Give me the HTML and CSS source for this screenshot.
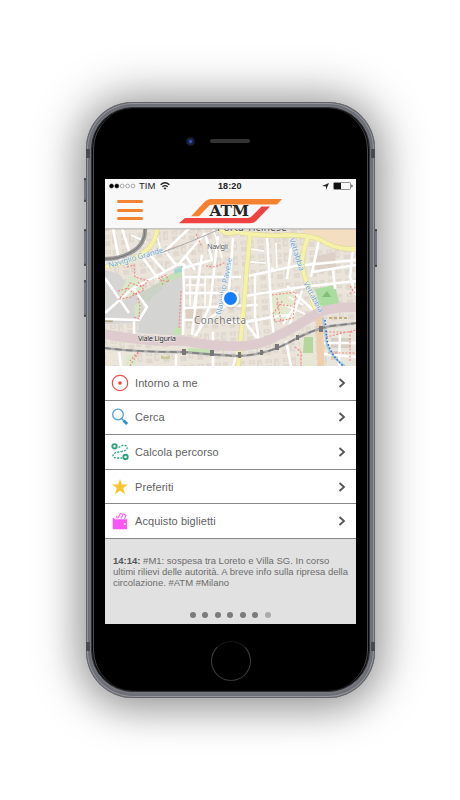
FILE: index.html
```html
<!DOCTYPE html>
<html lang="it">
<head>
<meta charset="utf-8">
<title>ATM Milano</title>
<link rel="stylesheet" href="styles.css">
</head>
<body>
<div class="phone">
  <i class="key mute"></i><i class="key vol-up"></i><i class="key vol-down"></i><i class="key power"></i>
  <i class="band band-tl"></i><i class="band band-tr"></i><i class="band band-bl"></i><i class="band band-br"></i>
  <div class="face">
    <div class="earpiece"><i class="camera"></i><i class="speaker"></i></div>
    <main class="screen">
      <header class="top">
        <div class="status">
          <svg class="signal" viewBox="0 0 28 6" width="28" height="6"><g stroke="#222" stroke-width=".6"><circle cx="2.5" cy="3" r="2"/><circle cx="7.8" cy="3" r="2"/><g fill="none" stroke="#777"><circle cx="13.2" cy="3" r="1.9"/><circle cx="18.6" cy="3" r="1.9"/><circle cx="24" cy="3" r="1.9"/></g></g></svg>
          <span class="carrier">TIM</span>
          <svg class="wifi" viewBox="0 0 10 8" width="10" height="8"><g fill="none" stroke="#222" stroke-width="1.3"><path d="M.6 2.8Q5-1.2 9.4 2.8"/><path d="M2.3 4.8Q5 2.5 7.7 4.8"/></g><path d="M3.5 6Q5 4.8 6.5 6L5 7.7z" fill="#222"/></svg>
          <span class="time">18:20</span>
          <svg class="locate" viewBox="0 0 8 8" width="7" height="7"><path d="M8 0L4.6 8V3.9L0 3.5z" fill="#222"/></svg>
          <svg class="battery" viewBox="0 0 20 8" width="20" height="8"><rect x=".5" y=".5" width="17" height="7" rx="1" fill="none" stroke="#777" stroke-width=".8"/><path d="M1 1h7v6H1z" fill="#111"/><path d="M18.3 2.5q1.4.2 1.4 1.5t-1.4 1.5z" fill="#444"/></svg>
        </div>
        <div class="bar">
          <div class="menu"><i></i><i></i><i></i></div>
          <svg class="logo" viewBox="0 0 104 26" width="104" height="26">
            <path d="M12 18.2L25 4.5Q28 1 32 1H103L98 6.500H34Q31 6.500 29 8.800L20 18.200z" fill="#f58230"/>
            <path d="M0 25.200L6 20H69Q71 20 73 18L82.500 8.500H91L77.500 22.500Q75 25.200 71 25.200z" fill="#ee4340"/>
            <text class="brand" x="30.500" y="18.400" textLength="39.500" lengthAdjust="spacingAndGlyphs">ATM</text>
          </svg>
        </div>
      </header>
      <svg class="map" viewBox="105 229 251 137" width="251" height="137">
        <defs>
          <pattern id="blocks" width="17" height="15" patternUnits="userSpaceOnUse" patternTransform="rotate(-4)">
            <path d="M0 0h17v15H0z" fill="#eae4db"/><path d="M2 2h6v4H2zM10 2h5v9h-5zM2 8h6v5H2z" fill="#e0d8ce"/><path d="M4 3h2v2H4zM12 5h2v4h-2z" fill="#e9e3da"/>
          </pattern>
        </defs>
        <path d="M105 228h251v138H105z" fill="url(#blocks)"/>
        <path d="M105 270l14 4 8 10-11 16 22-6 6 14-4 15-35 1z" fill="#d6d5d3"/>
        <path d="M138 295l40-23 5 4-2 60-43-3 1-13 9-14z" fill="#d4d4d3"/>
        <path d="M140 293l22-12 1 7-18 16-6-4z" fill="#cbd2c6"/>
        <path d="M159 281l23-13 2 8-15 5-8 6z" fill="#c5dfb8"/><path d="M174 270l8-4 0 5-7 3z" fill="#9ed5d2"/>
        <path d="M119 294l9-17 7-2 6 10 4 3-21 12z" fill="#dce8cc"/><path d="M134 306l8-7-1 14-6 5z" fill="#d3e6c5"/>
        <path d="M306 228h50v20q-26-1-38-10l-18-3z" fill="#f3dec2"/>
        <path d="M271 294l25-4-6 29-18 1z" fill="#e3e9cf"/>
        <path d="M317 256l18-4 1 16-14 5-7-4z" fill="#ddd0c7"/>
        <path d="M186 306h16v17h-16z" fill="#ddcfc1"/>
        <path d="M315 289l20-4 4 18-17 8-4-10z" fill="#abdca0"/><path d="M322 297l5-6 4 6z" fill="#83bd7a"/>
        <path d="M300 339l15-6-1 33h-12z" fill="#e7e8d4"/><path d="M304 337h9v16h-10z" fill="#b6d6a0"/>
        <path d="M325 330l31-5v41h-29z" fill="#e8e6dc"/><path d="M331 338h20v10h-20zM331 351h8v9h-8z" fill="#d6cec2"/>
        <path d="M106 353h28v12h-28z" fill="#ebe5da"/><path d="M126 355h10v11h-10z" fill="#dce9cd"/><path d="M188 348l20 1 8 7-28-3zM174 329l6-3 2 8-9 1z" fill="#c5e3b0"/>
        <path d="M161 355l4 2 5-2v4h-9z" fill="#cbc89c"/><path d="M105 318h8v4h-8z" fill="#aaa77c"/>
        <g fill="none" stroke="#fff" stroke-width="2.500" stroke-linejoin="round">
          <path d="M105 313l27-24 45-24q5-3 9 2M177 266l-12-15 31-29M179 264l26-31M105 278l24 35M105 319l34 1 8-13-14-19M134 320v15M183 268l1 20-1 47M183 277h58M183 293h56M184 308l74-3"/>
          <path d="M113 228l5 27 5 9M122 228l8 26M143 258l16 22M151 256l14 16M186 256l9 14M205 233l7 27-29 8M202 255l-8 52M200 267l-8 68M218 236l-8 69-14 31M233 238l-5 66-25 20-8 12M228 323l30-3M184 320h12"/>
          <path d="M248 276l47-10 61-6M242 323l30-6 16-2M245 296l57-9 54-6M267 237l5 83 2 16M255 274v42l4 25M291 248l-4 31M319 240l-8 37M312 272l44-7M333 270l2 19M353 250l-3 27 6 18M275 271l-4-3M295 306l-12 18M302 291l-13 35M287 286l26 24M240 315l17 23M213 332v34M286 341l5 25M239 348l-6 18M176 354v12M324 343h32M324 354l32 3M340 334l-1 32M119 352l2 14"/>
          <path d="M131 235l15 7M155 228l6 23M213 228l9 30M190 278v28M205 277v31M186 285h20M220 305l19 1M250 249l14 2M250 262l16 1M276 243l1 25M289 297l14 8M285 305l20 9" stroke-width="1.500"/>
        </g>
        <g fill="none" stroke="#f28783" stroke-width="1.100" stroke-dasharray="2 1.500">
          <path d="M127 267l7-2 1 12 13 4-6 6-12-4-5 9-6 7 12-2 8-6M118 291l10-3 7 7 9-5-6-8M138 298l2 8-1 13-5-2M158 279l8-4 3 7-8-2 2 5"/>
          <path d="M181 291l-1 18-1 19M206 266l9 1 11-5M165 251l10-4M196 234l6 13M272 295l24-3-3 26-18 4-2-8 10-14M276 304l15 2M277 298l4 24M130 366l5-8 5-8M138 352l-8 9M295 347l6 5v14M297 355h5M350 294l6-8M350 286l6 8M326 337l30-7M326 332h28M328 353h28M350 331v30"/>
        </g>
        <path d="M145 228q1 18-17 26-10 5-23 5" fill="none" stroke="#989898" stroke-width="4"/><path d="M145 228q1 18-17 26-10 5-23 5" fill="none" stroke="#777" stroke-width="1"/>
        <path d="M163 252q17-6 29-11t28-12" fill="none" stroke="#aaa" stroke-width="1"/>
        <g fill="none" stroke="#ddd58a" stroke-width="4.800"><path d="M157 228q-1 17-17 27-14 9-36 12"/><path d="M220 228q5 8 16 4 30 5 50 3 30 0 40 8 14 7 31 6M250 235l-3 30-3 40-6 62M308 237q-9 24-4 37l13 40"/></g>
        <g fill="none" stroke="#f5f1a9" stroke-width="4"><path d="M157 228q-1 17-17 27-14 9-36 12"/><path d="M220 228q5 8 16 4 30 5 50 3 30 0 40 8 14 7 31 6M250 235l-3 30-3 40-6 62M308 237q-9 24-4 37l13 40"/></g>
        <path d="M319 314l2 52" fill="none" stroke="#edcfad" stroke-width="7"/>
        <path d="M323 318l3 20q0 15 19 28" fill="none" stroke="#9bd0da" stroke-width="2"/><path d="M325 320l2 20q3 14 16 26" fill="none" stroke="#3d58d1" stroke-width="1.500" stroke-dasharray="1.500 2"/>
        <path d="M104 334q38 8 80 7 26 5 45 5 28 2 50-11 15-7 35-20 13-8 42-8" fill="none" stroke="#ddcbcd" stroke-width="9.500"/>
        <path d="M104 348q33 4 80 4 30 3 55 4 26-1 49-13 25-14 43-17l26-3" fill="none" stroke="#aaa" stroke-width="2.400"/>
        <path d="M104 348q33 4 80 4 30 3 55 4 26-1 49-13 25-14 43-17l26-3" fill="none" stroke="#808080" stroke-width="1.600" stroke-dasharray="7 4"/>
        <path d="M182 349h4v6h-4zM210 350h4v6h-4zM238 352h3v6h-3zM260 350h3v5h-3zM275 344h4v6h-4zM296 335h3v5h-3zM319 326h4v6h-4z" fill="#777"/>
        <path d="M329 318h20" stroke="#b49a5c" stroke-width="1.500" stroke-dasharray="3 2"/>
        <g class="water">
          <text transform="translate(109 268) rotate(-16)" textLength="57">Naviglio Grande</text>
          <text transform="translate(221 315) rotate(-79)" textLength="58">Naviglio Pavese</text>
          <text transform="translate(289 239) rotate(72)" textLength="34">Vettabbia</text>
          <text transform="translate(303 283) rotate(62)" textLength="34">Vettabbia</text>
        </g>
        <g class="places">
          <text x="217" y="231" font-size="10.500" textLength="70">Porta Ticinese</text>
          <text x="207" y="249" font-size="7.500" textLength="21">Navigli</text>
          <text class="road" x="138" y="341" font-size="7.500" textLength="38">Viale Liguria</text>
          <text class="area" x="194" y="324" font-size="10" textLength="52">Conchetta</text>
        </g>
        <path d="M105 229.500h251" stroke="#555" stroke-opacity=".15"/>
        <circle cx="231" cy="299" r="9.500" fill="#444" opacity=".2"/><circle cx="230.500" cy="298.500" r="8.800" fill="#fff"/><circle cx="230.500" cy="298.500" r="6.500" fill="#167efb"/>
      </svg>
      <nav class="list">
        <a class="row"><svg class="icon" viewBox="0 0 18 18"><circle cx="9" cy="9" r="7.700" fill="none" stroke="#f04b4b" stroke-width="1.200"/><circle cx="9" cy="9" r="1.800" fill="#f04040"/></svg><span>Intorno a me</span><svg class="chev" viewBox="0 0 8 10"><path d="M1.500 1l4.500 4-4.500 4"/></svg></a>
        <a class="row"><svg class="icon" viewBox="0 0 18 18"><circle cx="7" cy="6.500" r="5.300" fill="none" stroke="#4ba4d3" stroke-width="1.300"/><path d="M10.500 10.500l2 2" stroke="#398fc2" stroke-width="1.300"/><path d="M12.500 12.500l3.700 3.500" stroke="#398fc2" stroke-width="3"/></svg><span>Cerca</span><svg class="chev" viewBox="0 0 8 10"><path d="M1.500 1l4.500 4-4.500 4"/></svg></a>
        <a class="row"><svg class="icon" viewBox="0 0 18 18" fill="none" stroke="#26a578"><circle cx="3.500" cy="3.300" r="2.200" stroke-width="1.900"/><circle cx="14.500" cy="14" r="2.200" stroke-width="1.900"/><path d="M7.500 4.500l4-2h3q2 1 1.500 3-1 2.500-6 3l-5 1q-3 1-3 3 0 2 3 2.500h6" stroke-width="1.300" stroke-dasharray="2 1.300"/></svg><span>Calcola percorso</span><svg class="chev" viewBox="0 0 8 10"><path d="M1.500 1l4.500 4-4.500 4"/></svg></a>
        <a class="row"><svg class="icon" viewBox="0 0 18 18"><path d="M9 1l2 5.500h6l-4.800 3.600 1.900 6L9 12.700l-5.100 3.400 1.900-6L1 6.500h6z" fill="#f7c52c"/></svg><span>Preferiti</span><svg class="chev" viewBox="0 0 8 10"><path d="M1.500 1l4.500 4-4.500 4"/></svg></a>
        <a class="row"><svg class="icon" viewBox="0 0 18 18"><path d="M1.700 6h1.800v1.200H16v9.300q0 .8-.8.800H2.500q-.8 0-.8-.8z" fill="#fb55f4"/><path d="M6.500 6.500l3-5 2.500 1-2 4M10 6l2.500-4 2.500 1.200L13.500 7" fill="none" stroke="#fb70f5" stroke-width="1.300"/><path d="M5 6.500l1-3" stroke="#fb70f5"/><circle cx="13.800" cy="12" r="1" fill="#fff"/></svg><span>Acquisto biglietti</span><svg class="chev" viewBox="0 0 8 10"><path d="M1.500 1l4.500 4-4.500 4"/></svg></a>
      </nav>
      <section class="news">
        <p><b>14:14:</b> #M1: sospesa tra Loreto e Villa SG. In corso<br>ultimi rilievi delle autorità. A breve info sulla ripresa della<br>circolazione. #ATM #Milano</p>
        <div class="dots"><i></i><i></i><i></i><i></i><i></i><i></i><i class="last"></i></div>
      </section>
    </main>
    <div class="home"></div>
  </div>
</div>
</body>
</html>
```
FILE: styles.css
```css
* { box-sizing: border-box; }
body { margin: 0; height: 800px; overflow: hidden; background: #fff; font-family: "Liberation Sans", Arial, sans-serif; }
i { display: block; }
svg { display: block; flex: none; }
.phone {
  position: relative; width: 289px; height: 596px; margin: 102px 0 0 86px; padding: 5px 5px 6px;
  border-radius: 47px; background: #75777d;
  box-shadow: inset 0 0 0 1px #62636a, inset 0 0 0 2px #94959b, inset 0 0 1px 4px #6d6f76, 0 0 46px 8px rgba(0,0,0,.34), 0 10px 36px rgba(0,0,0,.16);
}
.face {
  height: 100%; border-radius: 42px; background: #000; border: 1px solid #303136;
  box-shadow: inset 0 0 0 1px #08080a, inset 2px 0 0 #48494d, inset -2px 0 0 #48494d;
  display: flex; flex-direction: column; align-items: center;
}
.earpiece { width: 100%; height: 71px; padding: 29px 0 0 94px; display: flex; align-items: flex-start; }
.camera { width: 9px; height: 9px; border-radius: 50%; background: radial-gradient(circle, #3552ac 0 1px, #17265c 2px, #15161c 4px); }
.speaker { width: 40px; height: 4px; margin: 2px 0 0 15px; border-radius: 2px; background: #333; }
.screen { width: 251px; height: 445px; background: #fff; display: flex; flex-direction: column; }
.top { height: 50px; background: #f8f8f8; border-bottom: 1px solid #c4c4c4; }
.status { height: 14px; display: flex; align-items: center; padding: 1px 3px 0 4px; color: #222; font-size: 9.500px; line-height: 12px; }
.signal { margin-top: -1px; }
.carrier { width: 17px; margin: -1px 0 0 2px; }
.wifi { margin: -1px 0 0 4px; }
.time { margin: -1px 0 0 48px; width: 26px; font-weight: 700; font-size: 9px; letter-spacing: .1px; }
.locate { margin-left: 78px; }
.battery { margin: -1px 0 0 4px; }
.bar { display: flex; padding: 5px 0 0 12px; }
.menu { width: 26px; padding-top: 2px; display: flex; flex-direction: column; gap: 5.500px; }
.menu i { height: 3px; border-radius: 2px; background: #f58230; }
.logo { margin-left: 36px; }
.brand { font: 700 14.500px "DejaVu Serif", serif; fill: #242424; }
.map { height: 137px; }
.map text { font-family: "Noto Sans", sans-serif; paint-order: stroke; stroke: rgba(255,255,255,.7); stroke-width: 1px; }
.water { fill: #6da3d4; font-size: 7.800px; }
.places { fill: #555; }
.places .area { fill: #777; }
.places .road { fill: #222; }
.list { display: flex; flex-direction: column; height: 173px; }
.row { height: 34.600px; border-bottom: 1.500px solid #888; display: flex; align-items: center; padding: 0 10px 0 6px; color: #5f5f5f; font-size: 11px; }
.row span { flex: 1; margin-left: 6px; letter-spacing: .07px; }
.icon { width: 18px; height: 18px; }
.chev { width: 8px; height: 10px; fill: none; stroke: #555; stroke-width: 1.800; }
.news { flex: 1; background: #e1e1e1; padding: 16px 0 0 8px; color: #6c6c6c; display: flex; flex-direction: column; }
.news p { margin: 0; font-size: 9.500px; line-height: 11px; white-space: nowrap; }
.news b { color: #555; }
.dots { display: flex; gap: 6.600px; margin: 24px 0 0 76.500px; }
.dots i { width: 6px; height: 6px; border-radius: 50%; background: #7b7b7b; }
.dots .last { background: #aaa; }
.home { width: 40px; height: 40px; margin-top: 17px; border-radius: 50%; border: 1px solid #3e3e45; border-top-color: #17171c; border-bottom-color: #33333a; }
.key { position: absolute; width: 2px; background: #777980; border-radius: 2px; box-shadow: inset 0 2px #44454c, inset 0 -2px #44454c; }
.mute { left: -2px; top: 76px; height: 24px; }
.vol-up { left: -2px; top: 127px; height: 37px; }
.vol-down { left: -2px; top: 178px; height: 37px; }
.power { right: -2px; top: 127px; height: 38px; }
.band { position: absolute; width: 4px; height: 9px; background: #484a50; }
.band-tl { left: 0; top: 47px; }
.band-tr { right: 0; top: 47px; }
.band-bl { left: 0; bottom: 47px; }
.band-br { right: 0; bottom: 47px; }
```
